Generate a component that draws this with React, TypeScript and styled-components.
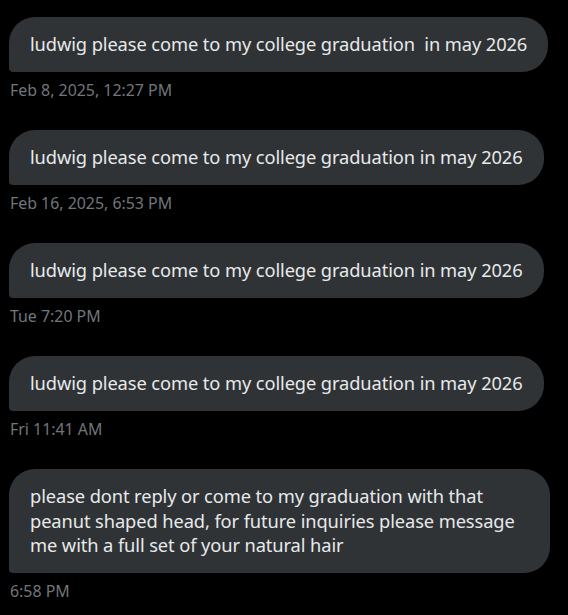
import React from 'react';
import styled, { createGlobalStyle } from 'styled-components';

type Message = {
  text: string;
  time: string;
};

const messages: Array<Message> = [
  {
    text: 'ludwig please come to my college graduation\u00a0 in may 2026',
    time: 'Feb 8, 2025, 12:27 PM',
  },
  {
    text: 'ludwig please come to my college graduation in may 2026',
    time: 'Feb 16, 2025, 6:53 PM',
  },
  {
    text: 'ludwig please come to my college graduation in may 2026',
    time: 'Tue 7:20 PM',
  },
  {
    text: 'ludwig please come to my college graduation in may 2026',
    time: 'Fri 11:41 AM',
  },
  {
    text: 'please dont reply or come to my graduation with that peanut shaped head, for future inquiries please message me with a full set of your natural hair',
    time: '6:58 PM',
  },
];

const GlobalStyle = createGlobalStyle`
  html, body {
    margin: 0;
    padding: 0;
    background: #000000;
  }

  body {
    font-family: 'Noto Sans', 'Open Sans', sans-serif;
  }
`;

const Thread = styled.div`
  display: flex;
  flex-direction: column;
  align-items: flex-start;
  gap: 30.5px;
  padding: 17px 0 0 9px;
  min-height: 615px;
  box-sizing: border-box;
  background: #000000;
`;

const MessageGroup = styled.div`
  display: flex;
  flex-direction: column;
  align-items: flex-start;
  gap: 8px;
`;

const Bubble = styled.div`
  max-width: 541px;
  box-sizing: border-box;
  padding: 15px 21px 15px 21px;
  background: #2f3336;
  color: #e7e9ea;
  border-radius: 26px 26px 26px 4px;
  font-size: 18.3px;
  line-height: 24.5px;
  letter-spacing: -0.1px;
`;

const Timestamp = styled.span`
  display: block;
  padding-left: 1px;
  color: #71767b;
  font-size: 15.9px;
  line-height: 20px;
`;

export default function App() {
  return (
    <>
      <GlobalStyle />
      <Thread>
        {messages.map((message, index) => (
          <MessageGroup key={index}>
            <Bubble>{message.text}</Bubble>
            <Timestamp>{message.time}</Timestamp>
          </MessageGroup>
        ))}
      </Thread>
    </>
  );
}
